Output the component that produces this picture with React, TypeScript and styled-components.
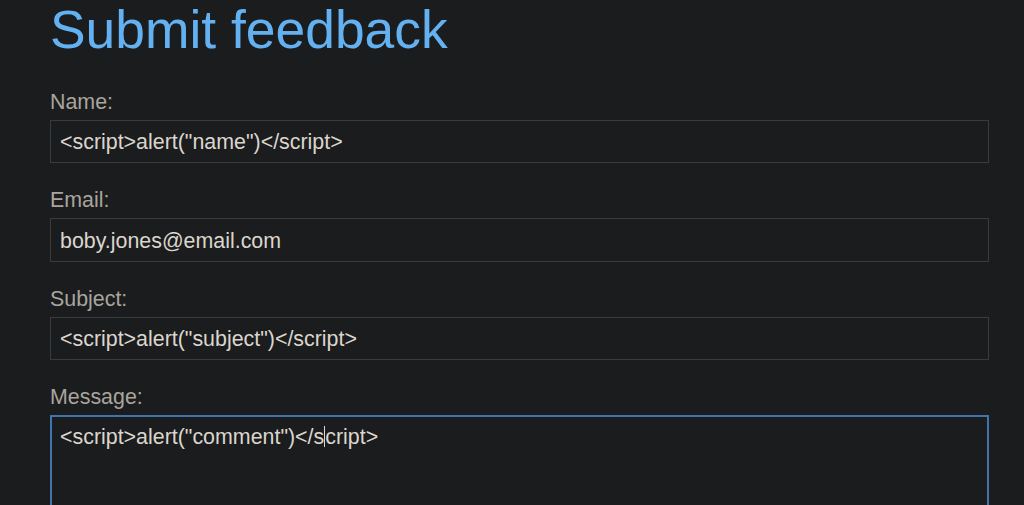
import React from "react";
import styled, { createGlobalStyle } from "styled-components";

const Global = createGlobalStyle`
  html, body {
    margin: 0;
    padding: 0;
    background: #1b1c1e;
  }
  body {
    font-family: "Liberation Sans", Arial, sans-serif;
  }
`;

const Page = styled.div`
  padding: 3px 35px 0 50px;
  height: 505px;
  overflow: hidden;
  box-sizing: border-box;
  background: #1b1c1e;
`;

const Title = styled.h1`
  margin: 0 0 34px 0;
  font-size: 53.4px;
  line-height: 53px;
  font-weight: 400;
  color: #63b1f1;
`;

const Field = styled.div`
  display: flex;
  flex-direction: column;
  gap: 5px;
  margin-bottom: 25px;
`;

const Label = styled.label`
  display: block;
  font-size: 21.4px;
  line-height: 25px;
  color: #a9a59d;
`;

const Input = styled.input`
  box-sizing: border-box;
  width: 100%;
  height: 43.4px;
  margin: 0;
  padding: 2px 9px 0;
  border: 1px solid #3a3b3d;
  background: #1b1c1e;
  color: #dbd6cd;
  font-family: "Liberation Sans", Arial, sans-serif;
  font-size: 21.4px;
  outline: none;
`;

const TextArea = styled.div`
  box-sizing: border-box;
  width: 100%;
  height: 100px;
  padding: 8px 8px;
  border: 2px solid #4373ad;
  background: #1b1c1e;
  color: #dbd6cd;
  font-size: 21.4px;
  line-height: 25px;
  white-space: pre;
`;

const Caret = styled.span`
  display: inline-block;
  width: 0;
  height: 21px;
  border-left: 1px solid #dbd6cd;
  vertical-align: -3px;
`;

export default function App() {
  return (
    <>
      <Global />
      <Page>
        <Title>Submit feedback</Title>
        <Field>
          <Label>Name:</Label>
          <Input readOnly value={'<script>alert("name")</script>'} />
        </Field>
        <Field>
          <Label>Email:</Label>
          <Input readOnly value="boby.jones@email.com" />
        </Field>
        <Field>
          <Label>Subject:</Label>
          <Input readOnly value={'<script>alert("subject")</script>'} />
        </Field>
        <Field>
          <Label>Message:</Label>
          <TextArea>
            {'<script>alert("comment")</s'}
            <Caret />
            {"cript>"}
          </TextArea>
        </Field>
      </Page>
    </>
  );
}
